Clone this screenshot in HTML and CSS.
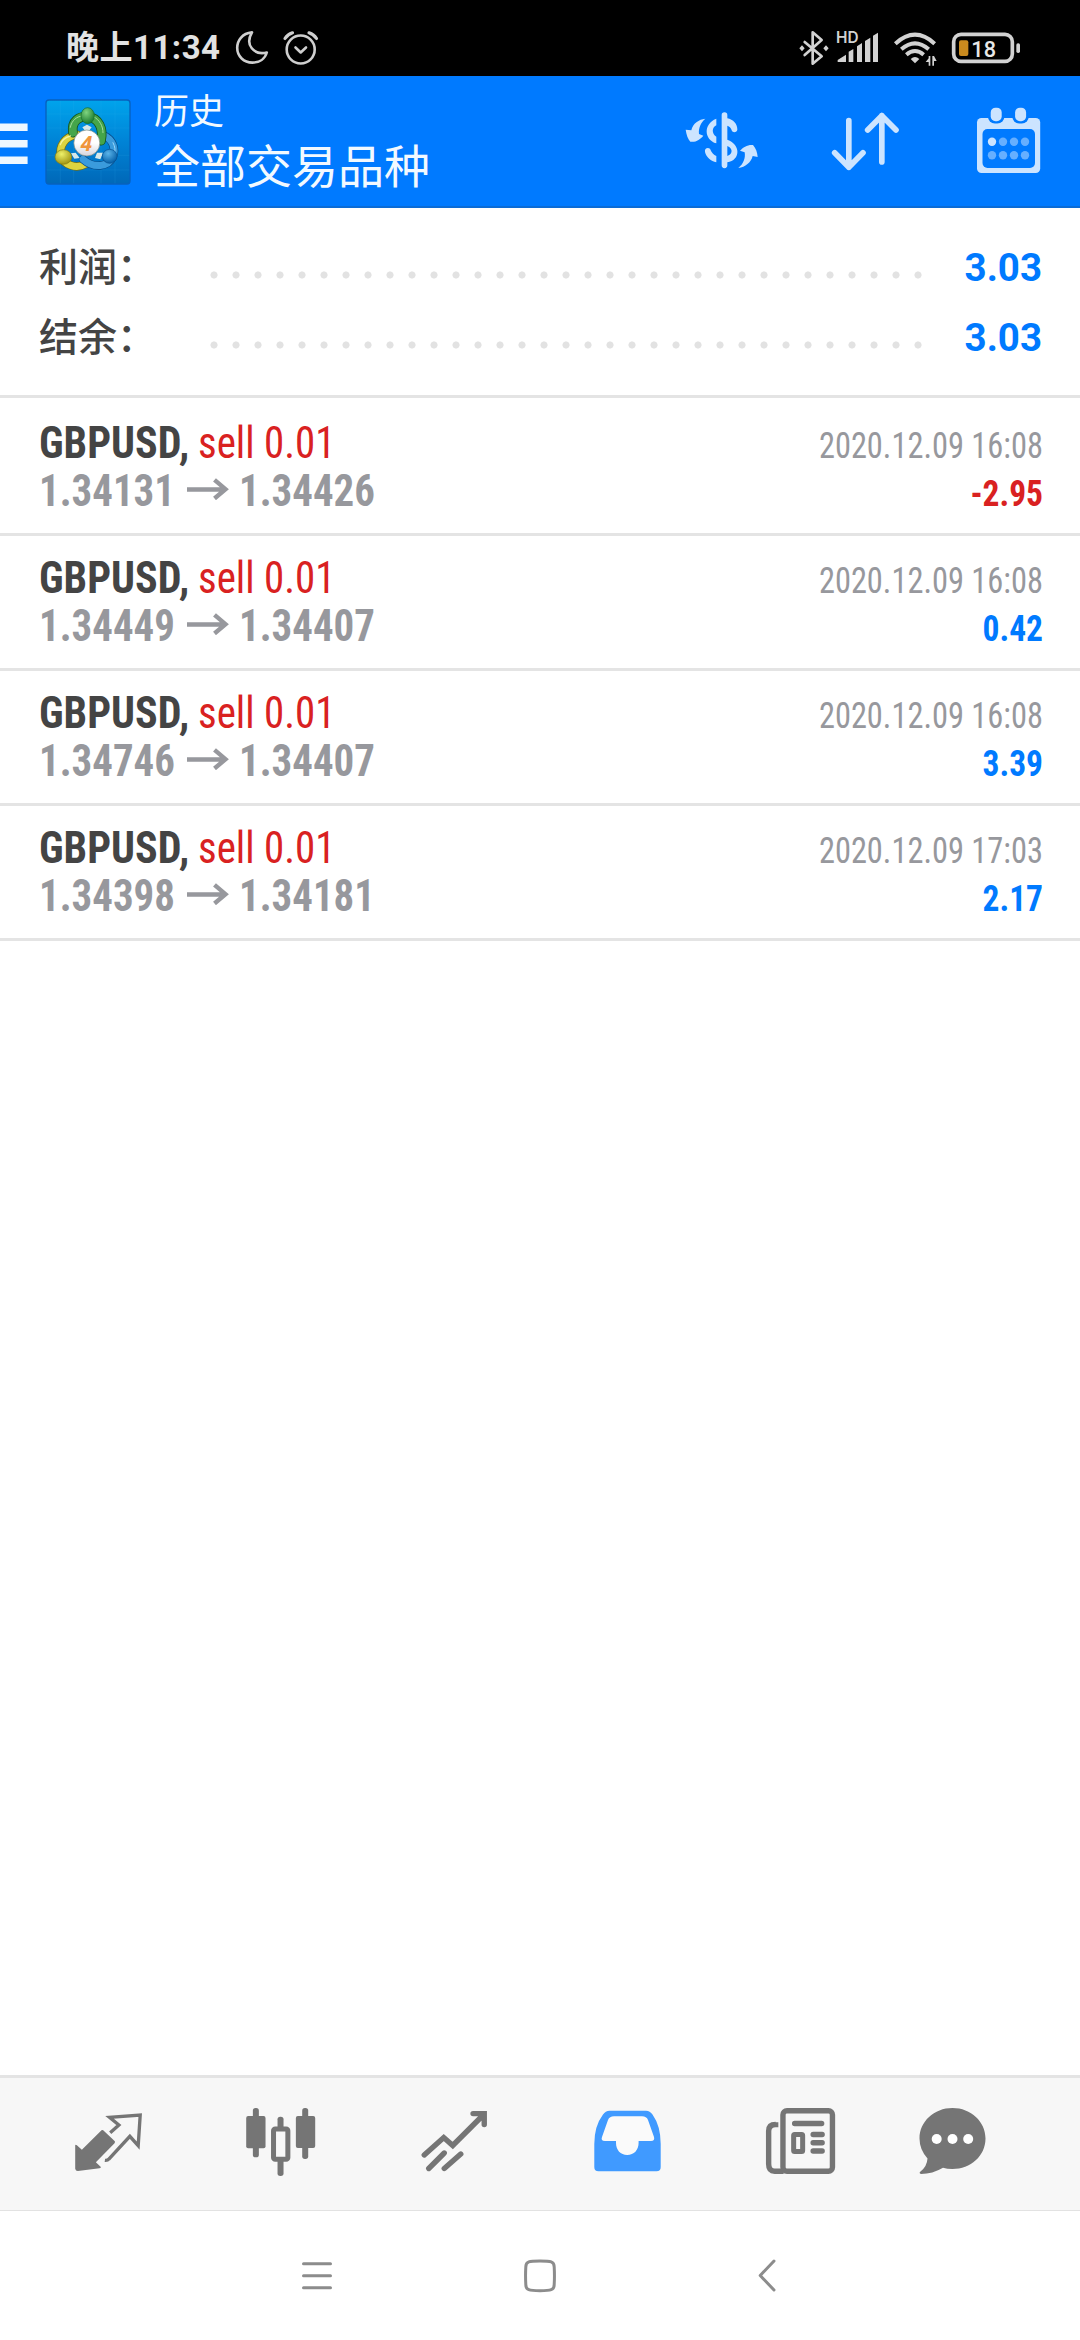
FILE: index.html
```
<!DOCTYPE html>
<html lang="zh-CN">
<head>
<meta charset="utf-8">
<title>历史</title>
<link rel="stylesheet" href="styles.css">
</head>
<body>
<svg class="defs" width="0" height="0">
  <symbol id="arrow" viewBox="0 0 42 22"><path d="M0 11.5H38M27.5 1.8 38.5 11.2 27.500 20.500" fill="none" stroke="currentColor" stroke-width="4.400"/></symbol>
</svg>

<div class="status">
  <div class="clock">晚上11:34</div>
  <svg class="status-left" viewBox="232 24 90 48" width="90" height="48" fill="none" stroke="#cfcfcf" stroke-width="2.600" stroke-linecap="round" stroke-linejoin="round">
    <path d="M252 32.400C242 33.500 237.200 40.500 237.200 47.800 237.200 56.500 244 62.600 252.300 62.600 259.500 62.600 265 58.800 266.800 52.500 254 55.500 244.500 45 252 32.400Z"/>
    <circle cx="300.700" cy="49.500" r="14"/>
    <path d="M295.500 47.500 300.700 52.500 306 47.500"/>
    <path d="M285 38.500Q287.500 34.500 292.500 32.800M316.500 38.500Q314 34.500 309 32.800" stroke-width="3.200"/>
  </svg>
  <svg class="status-right" viewBox="0 0 720 144" width="240" height="48" fill="#d2d2d2">
    <path d="M44 54 95 97 68 119V25L95 48 44 93" fill="none" stroke="#d2d2d2" stroke-width="8" stroke-linejoin="round" stroke-linecap="round"/>
    <path d="M36 64 44 73 36 82 28 73ZM108 64 116 73 108 82 100 73Z"/>
    <text x="138" y="56" class="hd">HD</text>
    <path d="M143 114V108L168 92V114ZM176 114V83L190 75V114ZM201 114V67L216 57V114ZM225 114V51L241 41V114ZM249 114V35L264 26V114Z"/>
    <g fill="none" stroke="#d2d2d2" stroke-width="12">
      <path d="M316 59Q375 5 434 59"/><path d="M334 76Q375 40 416 76"/><path d="M349 92Q375 70 401 92"/>
    </g>
    <path d="M362 105Q375 93 388 105L375 118Z"/>
    <path d="M416 96h5v29h-5V114H407L416 103ZM427 96h5l8 15h-8v14h-5Z"/>
    <rect x="491" y="31" width="176" height="81" rx="22" fill="none" stroke="#d2d2d2" stroke-width="11"/>
    <rect x="507" y="49" width="28" height="47" rx="6" fill="#c98a1e"/>
    <rect x="679" y="58" width="11" height="29" rx="5"/>
    <text x="544" y="98" class="pct">18</text>
  </svg>
</div>

<header class="appbar">
  <svg class="menu" viewBox="0 0 28 44" width="28" height="44" fill="#eef7ff"><path d="M0 3.600h27.600v7.400H0ZM0 20h27.600v7.400H0ZM0 36.600h27.600v7.400H0Z"/></svg>
  <svg class="logo" viewBox="46 27 258 258" width="86" height="86">
    <defs>
      <linearGradient id="bg" x1="0" y1="0" x2="0" y2="1"><stop offset="0" stop-color="#00a4ec"/><stop offset=".5" stop-color="#0083d6"/><stop offset="1" stop-color="#0068b8"/></linearGradient>
      <radialGradient id="gh" cx=".4" cy=".3" r=".7"><stop offset="0" stop-color="#7fd480"/><stop offset="1" stop-color="#1c7c30"/></radialGradient>
      <radialGradient id="yh" cx=".4" cy=".3" r=".7"><stop offset="0" stop-color="#eef06a"/><stop offset="1" stop-color="#a09512"/></radialGradient>
      <radialGradient id="bh" cx=".4" cy=".3" r=".7"><stop offset="0" stop-color="#5ab4ea"/><stop offset="1" stop-color="#0560a8"/></radialGradient>
      <linearGradient id="wh" x1="0" y1="0" x2="0" y2="1"><stop offset=".5" stop-color="#fff"/><stop offset="1" stop-color="#d4d4dc"/></linearGradient>
    </defs>
    <rect x="49" y="30" width="252" height="252" rx="9" fill="url(#bg)" stroke="#0761bd" stroke-width="4"/>
    <path d="M92 32V280M132 32V280M214 32V280M256 32V280M51 72H299M51 114H299M51 196H299M51 240H299" stroke="#3fb8f0" stroke-width="1.500" opacity=".25"/>
    <g fill="none" stroke-linecap="round">
      <path d="M142 134C104 140 88 170 94 196C102 226 140 238 168 222" stroke="#76700c" stroke-width="25"/>
      <path d="M142 134C104 140 88 170 94 196C102 226 140 238 168 222" stroke="#dcd440" stroke-width="21"/>
      <path d="M222 136C252 150 258 178 250 200C236 232 192 236 160 208" stroke="#064c8a" stroke-width="25"/>
      <path d="M222 136C252 150 258 178 250 200C236 232 192 236 160 208" stroke="#3a9bdc" stroke-width="21"/>
      <path d="M130 128C124 92 150 78 174 80C208 84 222 116 214 152" stroke="#14561f" stroke-width="29"/>
      <path d="M130 128C124 92 150 78 174 80C208 84 222 116 214 152" stroke="#45a54a" stroke-width="24"/>
      <path d="M122 112C126 90 142 80 156 78M192 80C210 90 220 108 220 128" stroke="#a5dd9c" stroke-width="3"/>
      <path d="M92 164C96 150 108 142 122 138" stroke="#f6f29a" stroke-width="4"/>
      <path d="M250 158C256 170 258 180 254 190" stroke="#9ad6f8" stroke-width="3"/>
    </g>
    <path d="M158 112 172 104 186 112 178 122H166ZM124 190 138 188 150 204 134 206ZM220 188 202 188 196 204 212 208Z" fill="#d5e8ea"/>
    <ellipse cx="174" cy="77" rx="20" ry="24" fill="url(#gh)" stroke="#176c2a" stroke-width="2"/>
    <ellipse cx="101" cy="201" rx="25" ry="22" fill="url(#yh)" stroke="#857c10" stroke-width="2"/>
    <ellipse cx="240" cy="199" rx="22" ry="21" fill="url(#bh)" stroke="#064f90" stroke-width="2"/>
    <circle cx="171.500" cy="159" r="39" fill="url(#wh)" stroke="#7d8a80" stroke-width="2"/>
    <text x="170" y="184" class="four">4</text>
  </svg>
  <div class="titles">
    <div class="title">历史</div>
    <div class="subtitle">全部交易品种</div>
  </div>
  <svg class="act-currency" viewBox="40 0 240 252" width="80" height="84" fill="#cce4ff">
    <path d="M107 56C88 58 69 70 65 91L48 89C50 104 55 117 62 125C78 128 92 118 101 107L88 102C86 84 93 68 107 56Z"/>
    <path d="M206 204C227 201 244 188 249 168L264 171C263 158 259 145 250 135C235 133 220 142 211 152L225 157C228 175 221 192 206 204Z"/>
    <path d="M140 56V76C126 82 126 102 140 110V130C104 120 99 72 140 56ZM106 156C104 146 113 141 121 146C126 158 132 164 140 168V187C124 184 110 172 106 156Z"/>
    <path d="M156 45a8.500 8.500 0 0 1 17 0V55C190 58 204 72 203 90C200 98 190 98 187 93C184 84 180 79 173 77V119C214 134 213 180 173 187V196a8.500 8.500 0 0 1-17 0ZM173 138V168C190 162 190 145 173 138Z" fill-rule="evenodd"/>
  </svg>
  <svg class="act-sort" viewBox="470 0 240 252" width="80" height="84" fill="none" stroke="#cce4ff" stroke-width="17" stroke-linecap="round" stroke-linejoin="round">
    <path d="M535.500 62V202M493 158 535.500 202 578 158M634.500 186V47M592 90 634.500 47 677 90"/>
  </svg>
  <svg class="act-calendar" viewBox="970 100 80 84" width="80" height="84">
    <rect x="977" y="118" width="63.200" height="55" rx="4.500" fill="#cce4ff"/>
    <rect x="982.500" y="129" width="52.500" height="39" rx="5" fill="#007aff"/>
    <rect x="987.900" y="104" width="16.500" height="19.500" rx="7" fill="#007aff"/><rect x="1012.300" y="104" width="16.500" height="19.500" rx="7" fill="#007aff"/>
    <rect x="990.700" y="107.700" width="11" height="13.500" rx="4.800" fill="#cce4ff"/><rect x="1015.100" y="107.700" width="11" height="13.500" rx="4.800" fill="#cce4ff"/>
    <circle cx="992" cy="141.700" r="4.200" fill="#cce4ff"/>
    <g fill="#66afff"><circle cx="1003" cy="141.700" r="4.200"/><circle cx="1014" cy="141.700" r="4.200"/><circle cx="1025" cy="141.700" r="4.200"/><circle cx="992" cy="155.300" r="4.200"/><circle cx="1003" cy="155.300" r="4.200"/><circle cx="1014" cy="155.300" r="4.200"/><circle cx="1025" cy="155.300" r="4.200"/></g>
  </svg>
</header>

<main class="content">
  <section class="summary">
    <div class="sum-row"><span class="sum-label">利润：</span><span class="dots"></span><span class="sum-value">3.03</span></div>
    <div class="sum-row"><span class="sum-label">结余：</span><span class="dots"></span><span class="sum-value">3.03</span></div>
  </section>
  <section class="deals">
    <article class="deal">
      <div class="line"><div class="name"><span class="symbol">GBPUSD,</span><span class="side">sell 0.01</span></div><time class="date">2020.12.09 16:08</time></div>
      <div class="line"><div class="prices"><span class="price">1.34131</span><svg class="arrow"><use href="#arrow"/></svg><span class="price">1.34426</span></div><span class="profit loss">-2.95</span></div>
    </article>
    <article class="deal">
      <div class="line"><div class="name"><span class="symbol">GBPUSD,</span><span class="side">sell 0.01</span></div><time class="date">2020.12.09 16:08</time></div>
      <div class="line"><div class="prices"><span class="price">1.34449</span><svg class="arrow"><use href="#arrow"/></svg><span class="price">1.34407</span></div><span class="profit">0.42</span></div>
    </article>
    <article class="deal">
      <div class="line"><div class="name"><span class="symbol">GBPUSD,</span><span class="side">sell 0.01</span></div><time class="date">2020.12.09 16:08</time></div>
      <div class="line"><div class="prices"><span class="price">1.34746</span><svg class="arrow"><use href="#arrow"/></svg><span class="price">1.34407</span></div><span class="profit">3.39</span></div>
    </article>
    <article class="deal">
      <div class="line"><div class="name"><span class="symbol">GBPUSD,</span><span class="side">sell 0.01</span></div><time class="date">2020.12.09 17:03</time></div>
      <div class="line"><div class="prices"><span class="price">1.34398</span><svg class="arrow"><use href="#arrow"/></svg><span class="price">1.34181</span></div><span class="profit">2.17</span></div>
    </article>
  </section>
</main>

<nav class="tabs">
  <svg viewBox="24.400 0 240 270" width="80" height="90" fill="#757575">
    <path d="M125 91Q127 89 130 91L165 124Q166 127 164 130L108 187 123 201Q124 204 119 205L54 213Q47 213 46 206V136Q47 133 51 136L66 149Z"/>
    <path d="M151 98 177 75 149 52 241 45 235 137 210 109 147 177Q143 182 135 181" fill="none" stroke="#757575" stroke-width="10"/>
  </svg>
  <svg viewBox="544.400 0 240 270" width="80" height="90" fill="#757575">
    <rect x="580" y="24" width="18" height="148" rx="8"/><rect x="560" y="48" width="58" height="97" rx="6"/>
    <rect x="728" y="24" width="18" height="153" rx="8"/><rect x="709" y="48" width="58" height="96" rx="6"/>
    <rect x="654" y="50" width="18" height="40" rx="8"/><rect x="654" y="175" width="18" height="53" rx="8"/>
    <rect x="642" y="87" width="43" height="91" rx="5" fill="#f7f7f7" stroke="#757575" stroke-width="15"/>
  </svg>
  <svg viewBox="414.750 2100 80 90" width="80" height="90" fill="none" stroke="#757575" stroke-width="5.400" stroke-linecap="round" stroke-linejoin="round">
    <path d="M424 2155 443.500 2137.500 452.500 2145.500 483 2115M472.800 2113.600H484V2124.500" stroke-linejoin="miter"/>
    <path d="M428.500 2168.500 444 2153M444 2168.500 460.500 2154"/>
  </svg>
  <svg viewBox="588 2100 80 90" width="80" height="90">
    <path d="M609.500 2110.700H646Q650 2110.700 652.500 2114.500Q660.700 2126 660.700 2144V2167Q660.700 2171.300 656.500 2171.300H598.500Q594.300 2171.300 594.300 2167V2144Q594.300 2126 603 2114.500Q605.500 2110.700 609.500 2110.700Z" fill="#409aff"/>
    <path d="M614 2116.300H642Q646.500 2116.300 648 2120L654 2137Q655 2141 651 2141H638.600V2143C638.600 2150 634 2155 627.200 2155C620.500 2155 616 2150 616 2143V2141H605Q600.500 2141 602 2137L608 2120Q609.500 2116.300 614 2116.300Z" fill="#fafafa"/>
  </svg>
  <svg viewBox="761.350 2100 80 90" width="80" height="90" fill="none" stroke="#757575">
    <rect x="783.300" y="2110.700" width="49.500" height="60.500" rx="4" stroke-width="5.400"/>
    <path d="M776 2122.300V2124.500Q769 2124.500 769 2131V2164Q769 2171.200 775 2171.200H784" stroke-width="5.400"/>
    <path d="M795 2123.500H822M813.500 2134.500H822.500M813.500 2142.800H822.500M813.500 2151H822.500" stroke-width="5.400" stroke-linecap="round"/>
    <rect x="794" y="2134.500" width="9" height="17" rx="1" stroke-width="5"/>
  </svg>
  <svg viewBox="913.500 2100 80 90" width="80" height="90">
    <path d="M953 2108C971.500 2108 986 2121.500 986 2138.500C986 2156 971 2169 953 2169Q947.500 2169 943.500 2167.800Q933 2174 921.500 2174Q919 2173 921 2171.500Q927.500 2166.500 928 2158.500Q920 2149.500 920 2138.500C920 2121.500 934.500 2108 953 2108Z" fill="#757575"/>
    <g fill="#fff"><circle cx="937.200" cy="2139" r="5"/><circle cx="953" cy="2139" r="5"/><circle cx="968.700" cy="2139" r="5"/></g>
  </svg>
</nav>

<div class="sysnav">
  <svg viewBox="0 0 40 40" width="40" height="40"><path d="M6.500 7.700H33.500M6.500 19.700H33.500M6.500 31.700H33.500"/></svg>
  <svg viewBox="0 0 40 40" width="40" height="40"><path d="M20 5C31 5 34.200 5.400 34.200 11Q34.700 20 34.200 28.500C34.200 34 31 34.700 20 34.700S5.800 34 5.800 28.500Q5.300 20 5.800 11C5.800 5.400 9 5 20 5Z"/></svg>
  <svg viewBox="0 0 40 40" width="40" height="40"><path d="M27 5 13.200 19.500 27 34"/></svg>
</div>
</body>
</html>
```
FILE: styles.css
```
* { box-sizing: border-box; }
body {
  margin: 0;
  width: 1080px;
  height: 2340px;
  display: flex;
  flex-direction: column;
  background: #fff;
  font-family: Roboto, "Noto Sans CJK SC", sans-serif;
  overflow: hidden;
}
svg { display: block; flex: none; }
.defs { display: none; }

.status {
  height: 76px;
  padding: 20px 50px 0 66px;
  display: flex;
  align-items: center;
  background: #000;
  flex: none;
}
.clock {
  width: 166px;
  font-size: 33px;
  font-weight: 700;
  line-height: 48px;
  letter-spacing: 0.500px;
  color: #e2e2e2;
  white-space: nowrap;
}
.status-right { margin-left: auto; }
.hd { font: 600 46px Inter, sans-serif; }
.pct { font: 500 65px Roboto, sans-serif; fill: #e8e8e8; }

.appbar {
  height: 132px;
  display: flex;
  align-items: center;
  background: #007aff;
  box-shadow: inset 0 -2px #0b6cd6;
  color: #f2f9ff;
  flex: none;
}
.logo { margin-left: 17px; }
.four { font: italic 700 62px "Open Sans", sans-serif; fill: #f0963c; text-anchor: middle; }
.titles { width: 528px; margin-left: 23px; padding-top: 3px; }
.title { font-size: 35px; line-height: 48px; }
.subtitle { font-size: 46px; line-height: 61px; }
.act-currency { margin-left: 1px; }
.act-sort { margin-left: 64px; }
.act-calendar { margin-left: 63px; }

.content { flex: 1; }
.summary { padding: 23px 38px 24px 39px; border-bottom: 3px solid #e4e4e4; }
.sum-row { height: 70px; display: flex; align-items: center; }
.sum-label { width: 164px; padding-bottom: 5px; font-size: 39px; font-weight: 500; color: #444; }
.dots {
  width: 726px;
  height: 8px;
  margin-top: 17px;
  background: radial-gradient(circle at 50% 50%, #e2e2e2 3.200px, transparent 3.900px) 0 0 / 22px 8px repeat-x;
}
.sum-value { margin-left: auto; padding-top: 2px; font-size: 38.500px; font-weight: 700; color: #007aff; }

.deals { padding-top: 3px; }
.deal { height: 135px; padding: 18px 37px 0 39px; border-bottom: 3px solid #e4e4e4; font-stretch: 75%; }
.line { height: 48px; display: flex; justify-content: space-between; align-items: baseline; line-height: 48px; font-size: 44px; white-space: nowrap; }
.name, .prices { display: flex; align-items: baseline; }
.symbol { width: 159px; font-weight: 700; color: #444; transform: scaleX(0.955); transform-origin: left; }
.side { color: #d92121; transform: scaleX(0.93); transform-origin: left; }
.prices { font-weight: 700; color: #97989d; }
.price { width: 148px; transform: scaleX(0.93); transform-origin: left; }
.arrow { width: 42px; height: 22px; margin-right: 10px; transform: translateY(-6px); color: #97989d; }
.date { font-size: 36px; color: #97989d; transform: scaleX(0.9); transform-origin: right; }
.profit { font-size: 36px; font-weight: 700; color: #007aff; transform: scaleX(0.93); transform-origin: right; }
.profit.loss { color: #d92121; }

.tabs {
  height: 136px;
  padding: 22px 0 0 21.500px;
  display: grid;
  grid-template-columns: repeat(5, 173.300px) 131px;
  justify-items: center;
  align-items: start;
  background: #f7f7f7;
  border-top: 3px solid #e4e4e4;
  border-bottom: 1px solid #e2e2e2;
  flex: none;
}
.sysnav {
  height: 129px;
  padding-left: 205.500px;
  display: grid;
  grid-template-columns: 223px 223px 231px;
  justify-items: center;
  align-items: center;
  flex: none;
}
.sysnav svg { fill: none; stroke: #8c8c8c; stroke-width: 3; stroke-linecap: round; stroke-linejoin: round; }
```
